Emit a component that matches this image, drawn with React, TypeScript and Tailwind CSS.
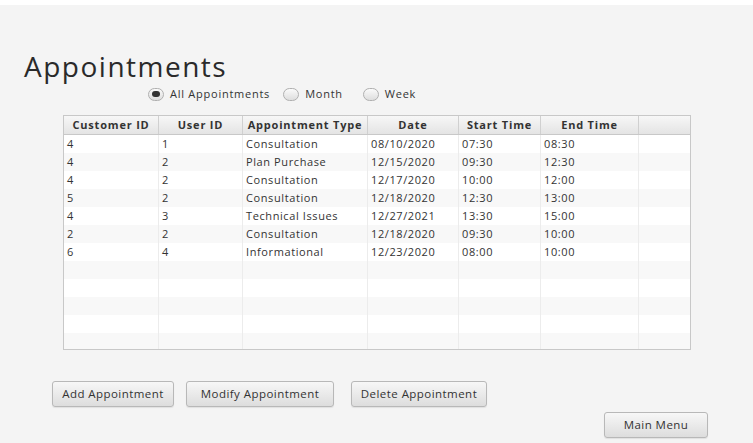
const rows: string[][] = [
  ['4', '1', 'Consultation', '08/10/2020', '07:30', '08:30'],
  ['4', '2', 'Plan Purchase', '12/15/2020', '09:30', '12:30'],
  ['4', '2', 'Consultation', '12/17/2020', '10:00', '12:00'],
  ['5', '2', 'Consultation', '12/18/2020', '12:30', '13:00'],
  ['4', '3', 'Technical Issues', '12/27/2021', '13:30', '15:00'],
  ['2', '2', 'Consultation', '12/18/2020', '09:30', '10:00'],
  ['6', '4', 'Informational', '12/23/2020', '08:00', '10:00'],
];

const headers = ['Customer ID', 'User ID', 'Appointment Type', 'Date', 'Start Time', 'End Time', ''];
const widths = ['w-[95px]', 'w-[84px]', 'w-[125px]', 'w-[91px]', 'w-[82px]', 'w-[98px]', 'flex-1'];

function Radio({ label, checked }: { label: string; checked?: boolean }) {
  return (
    <div className="flex items-center gap-[6px]">
      <div className="w-[16px] h-[13px] rounded-full border border-[#b0b0b0] bg-gradient-to-b from-[#fafafa] to-[#dedede] flex items-center justify-center">
        {checked && <div className="w-[8px] h-[6px] rounded-full bg-[#333]" />}
      </div>
      <span>{label}</span>
    </div>
  );
}

function Button({ label, className }: { label: string; className: string }) {
  return (
    <button className={`h-[26px] rounded-[3px] border border-[#b8b8b8] bg-gradient-to-b from-[#f7f7f7] to-[#dddddd] text-[11.5px] text-[#333] tracking-[0.45px] shadow-[0_1px_1px_rgba(0,0,0,0.08)] ${className}`}>
      {label}
    </button>
  );
}

export default function App() {
  const allRows = [...rows, ...Array.from({ length: 5 }, () => ['', '', '', '', '', ''])];
  return (
    <div
      className="w-[753px] h-[443px] bg-[#f4f4f4] border-t-[5px] border-white text-[#333] overflow-hidden"
      style={{ fontFamily: '"Open Sans", "Noto Sans", sans-serif' }}
    >
      <h1 className="ml-[24px] mt-[45px] text-[28px] leading-[32px] tracking-[1.5px] text-[#2a2a2a]">Appointments</h1>

      <div className="ml-[148px] mt-[4px] flex items-center text-[11px] tracking-[0.75px] h-[16px]">
        <Radio label="All Appointments" checked />
        <div className="w-[13px]" />
        <Radio label="Month" />
        <div className="w-[20px]" />
        <Radio label="Week" />
      </div>

      <div className="ml-[63px] mt-[13px] w-[628px] border border-[#c8c8c8] bg-white text-[11px] tracking-[0.6px]">
        <div className="flex h-[19px] bg-gradient-to-b from-[#f7f7f7] to-[#e4e4e4] border-b border-[#c8c8c8] font-bold text-[#333] tracking-[0.8px]">
          {headers.map((h, i) => (
            <div
              key={i}
              className={`${widths[i]} ${i < 6 ? 'border-r border-[#d0d0d0]' : ''} flex items-center justify-center`}
            >
              {h}
            </div>
          ))}
        </div>
        <div className="h-[214px] overflow-hidden">
          {allRows.map((r, ri) => (
            <div key={ri} className={`flex h-[18px] ${ri % 2 === 0 ? 'bg-white' : 'bg-[#f8f8f8]'}`}>
              {[...r, ''].map((c, ci) => (
                <div
                  key={ci}
                  className={`${widths[ci]} ${ci < 6 ? 'border-r border-[#ececec]' : ''} flex items-center pl-[3px]`}
                >
                  {c}
                </div>
              ))}
            </div>
          ))}
        </div>
      </div>

      <div className="ml-[52px] mt-[31px] flex">
        <Button label="Add Appointment" className="w-[122px]" />
        <Button label="Modify Appointment" className="ml-[12px] w-[148px]" />
        <Button label="Delete Appointment" className="ml-[17px] w-[136px]" />
      </div>

      <div className="flex justify-end mr-[45px] mt-[5px]">
        <Button label="Main Menu" className="w-[104px]" />
      </div>
    </div>
  );
}
